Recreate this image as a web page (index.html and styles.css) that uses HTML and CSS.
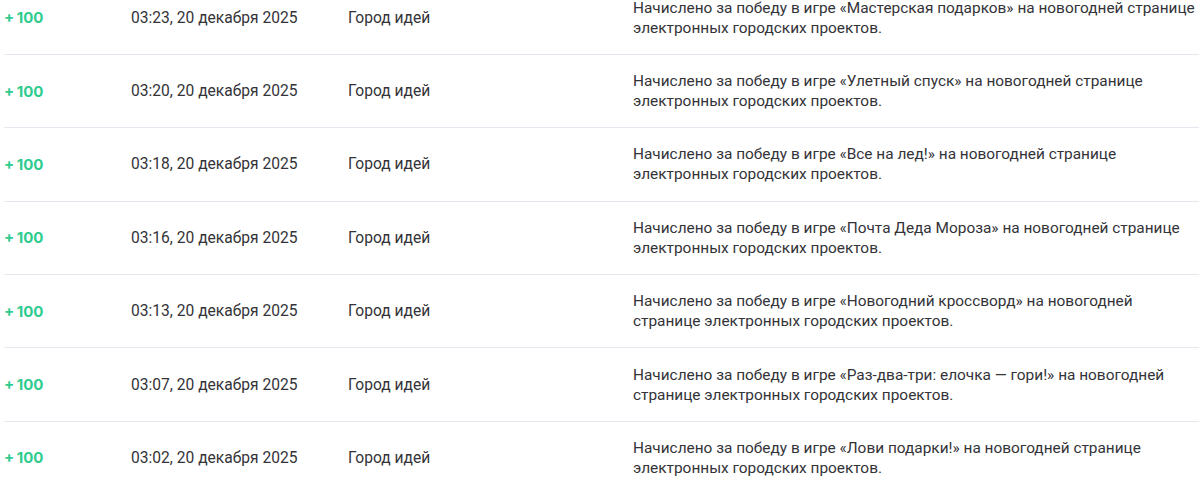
FILE: index.html
```html
<!DOCTYPE html>
<html lang="ru">
<head>
<meta charset="utf-8">
<link rel="stylesheet" href="styles.css">
</head>
<body>
<div class="history">
  <div class="row">
    <div class="amount">+ 100</div>
    <div class="date">03:23, 20 декабря 2025</div>
    <div class="source">Город идей</div>
    <div class="desc">Начислено за победу в игре «Мастерская подарков» на новогодней странице электронных городских проектов.</div>
  </div>
  <div class="row">
    <div class="amount">+ 100</div>
    <div class="date">03:20, 20 декабря 2025</div>
    <div class="source">Город идей</div>
    <div class="desc">Начислено за победу в игре «Улетный спуск» на новогодней странице электронных городских проектов.</div>
  </div>
  <div class="row">
    <div class="amount">+ 100</div>
    <div class="date">03:18, 20 декабря 2025</div>
    <div class="source">Город идей</div>
    <div class="desc">Начислено за победу в игре «Все на лед!» на новогодней странице электронных городских проектов.</div>
  </div>
  <div class="row">
    <div class="amount">+ 100</div>
    <div class="date">03:16, 20 декабря 2025</div>
    <div class="source">Город идей</div>
    <div class="desc">Начислено за победу в игре «Почта Деда Мороза» на новогодней странице электронных городских проектов.</div>
  </div>
  <div class="row">
    <div class="amount">+ 100</div>
    <div class="date">03:13, 20 декабря 2025</div>
    <div class="source">Город идей</div>
    <div class="desc">Начислено за победу в игре «Новогодний кроссворд» на новогодней странице электронных городских проектов.</div>
  </div>
  <div class="row">
    <div class="amount">+ 100</div>
    <div class="date">03:07, 20 декабря 2025</div>
    <div class="source">Город идей</div>
    <div class="desc">Начислено за победу в игре «Раз-два-три: елочка — гори!» на новогодней странице электронных городских проектов.</div>
  </div>
  <div class="row">
    <div class="amount">+ 100</div>
    <div class="date">03:02, 20 декабря 2025</div>
    <div class="source">Город идей</div>
    <div class="desc">Начислено за победу в игре «Лови подарки!» на новогодней странице электронных городских проектов.</div>
  </div>
</div>
</body>
</html>
```
FILE: styles.css
```css
html, body {
  margin: 0;
  padding: 0;
  background: #ffffff;
}
body {
  font-family: Roboto, "Noto Sans", sans-serif;
  color: #333338;
  overflow: hidden;
}
.history {
  margin: -18.5px 1px 0 4px;
}
.row {
  display: grid;
  grid-template-columns: 127px 217px 285px 1fr;
  align-items: center;
  padding: 16.2px 0;
  border-bottom: 1px solid #e6e7ef;
}
.amount {
  font-family: Inter, sans-serif;
  font-size: 15px;
  font-weight: 700;
  color: #2fcb8f;
  word-spacing: -1px;
}
.date, .source {
  font-size: 15.6px;
  line-height: 20px;
}
.desc {
  font-size: 15.4px;
  line-height: 20px;
}
```
